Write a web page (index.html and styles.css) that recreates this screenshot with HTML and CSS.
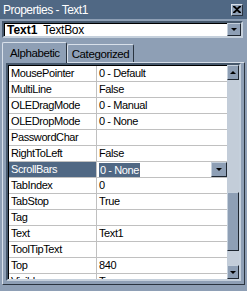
FILE: index.html
```html
<!DOCTYPE html>
<html lang="en">
<head>
    <meta charset="UTF-8">
    <title>Properties - Text1</title>
    <link rel="stylesheet" href="styles.css">
</head>
<body>

    <div class="window">
        <div class="titlebar">
            <span class="title">Properties - Text1</span>
            <button class="btn-close">
                <svg width="8" height="7" viewBox="0 0 8 7"><path d="M0 0h2l2 2 2-2h2v1L5 3.5 8 6v1H6L4 5 2 7H0V6l3-2.5L0 1z" fill="#000"/></svg>
            </button>
        </div>

        <div class="combo">
            <span class="combo-text"><b>Text1</b>&nbsp; TextBox</span>
            <span class="drop-btn"><span class="arrow"></span></span>
        </div>

        <div class="tabs">
            <div class="tab active">Alphabetic</div>
            <div class="tab">Categorized</div>
        </div>

        <div class="panel">
            <div class="grid">
                <div class="rows">
                    <div class="row"><div class="name">MousePointer</div><div class="value">0 - Default</div></div>
                    <div class="row"><div class="name">MultiLine</div><div class="value">False</div></div>
                    <div class="row"><div class="name">OLEDragMode</div><div class="value">0 - Manual</div></div>
                    <div class="row"><div class="name">OLEDropMode</div><div class="value">0 - None</div></div>
                    <div class="row"><div class="name">PasswordChar</div><div class="value"></div></div>
                    <div class="row"><div class="name">RightToLeft</div><div class="value">False</div></div>
                    <div class="row selected">
                        <div class="name">ScrollBars</div>
                        <div class="value"><span class="sel-text">0 - None</span><span class="drop-btn small"><span class="arrow"></span></span></div>
                    </div>
                    <div class="row"><div class="name">TabIndex</div><div class="value">0</div></div>
                    <div class="row"><div class="name">TabStop</div><div class="value">True</div></div>
                    <div class="row"><div class="name">Tag</div><div class="value"></div></div>
                    <div class="row"><div class="name">Text</div><div class="value">Text1</div></div>
                    <div class="row"><div class="name">ToolTipText</div><div class="value"></div></div>
                    <div class="row"><div class="name">Top</div><div class="value">840</div></div>
                    <div class="row"><div class="name">Visible</div><div class="value">True</div></div>
                </div>
                <div class="scrollbar">
                    <div class="sb-btn up"><span class="arrow up"></span></div>
                    <div class="sb-track">
                        <div class="sb-thumb"></div>
                    </div>
                    <div class="sb-btn down"><span class="arrow"></span></div>
                </div>
            </div>
        </div>
    </div>

</body>
</html>
```

FILE: styles.css
```css
body {
    margin: 0;
    font-family: "Liberation Sans", Arial, sans-serif;
    font-size: 11px;
}

.window {
    width: 247px;
    height: 291px;
    background: #8e9fb5;
    display: flex;
    flex-direction: column;
    overflow: hidden;
}

.titlebar {
    flex-shrink: 0;
    height: 19px;
    background: #506884;
    color: #ffffff;
    display: flex;
    align-items: center;
    justify-content: space-between;
    padding: 0 4px 0 3px;
    font-size: 12px;
    letter-spacing: -0.5px;
}

.btn-close {
    width: 12px;
    height: 12px;
    padding: 0;
    box-sizing: border-box;
    background: #8e9fb5;
    border: 1px solid;
    border-color: #d8e0ea #2a3440 #2a3440 #d8e0ea;
    display: flex;
    align-items: center;
    justify-content: center;
}

/* object combo box */
.combo {
    flex-shrink: 0;
    margin: 2px 4px 0 2px;
    height: 17px;
    box-sizing: border-box;
    background: #ffffff;
    border: 2px solid;
    border-color: #46586c #c5d0dc #c5d0dc #46586c;
    box-shadow: inset 1px 1px 0 #000;
    display: flex;
    align-items: center;
    justify-content: space-between;
}

.combo-text {
    padding-left: 3px;
    font-size: 12px;
    letter-spacing: -0.3px;
}

.combo-text b {
    letter-spacing: 0;
}

.drop-btn {
    width: 14px;
    height: 13px;
    background: #8e9fb5;
    border: 1px solid;
    border-color: #c5d0dc #1e2630 #1e2630 #c5d0dc;
    box-sizing: border-box;
    display: flex;
    align-items: center;
    justify-content: center;
}

.arrow {
    width: 0;
    height: 0;
    border-left: 3px solid transparent;
    border-right: 3px solid transparent;
    border-top: 3px solid #000;
}

.arrow.up {
    border-top: none;
    border-bottom: 3px solid #000;
}

/* tabs */
.tabs {
    flex-shrink: 0;
    display: flex;
    align-items: flex-end;
    margin-top: 4px;
    padding-left: 2px;
    height: 20px;
}

.tab {
    height: 17px;
    padding: 0 4px;
    border: 1px solid;
    border-bottom: none;
    border-color: #d8e0ea #2a3440 #2a3440 #d8e0ea;
    border-radius: 2px 2px 0 0;
    display: flex;
    align-items: center;
    color: #000;
    font-size: 11.5px;
    letter-spacing: -0.4px;
}

.tab.active {
    height: 20px;
    padding: 0 6px 0 7px;
    position: relative;
    z-index: 1;
    background: #8e9fb5;
    margin-bottom: -1px;
}

/* tab panel */
.panel {
    flex: 1;
    min-height: 0;
    margin: 0 2px 6px 2px;
    border: 1px solid;
    border-color: #d8e0ea #2a3440 #2a3440 #d8e0ea;
    padding: 0 3px 3px 3px;
    display: flex;
}

.grid {
    flex: 1;
    display: flex;
    border: 2px solid;
    border-color: #46586c #c5d0dc #c5d0dc #46586c;
    box-shadow: inset 1px 1px 0 #000;
    background: #ffffff;
    overflow: hidden;
}

.rows {
    flex: 1;
    padding-top: 1px;
    padding-left: 1px;
    overflow: hidden;
    letter-spacing: -0.4px;
}

.row {
    height: 16px;
    box-sizing: border-box;
    border-bottom: 1px solid #c0c0c0;
    display: flex;
}

.name {
    width: 85px;
    padding-left: 2px;
    border-right: 1px solid #c0c0c0;
    line-height: 15px;
    white-space: nowrap;
    overflow: hidden;
}

.value {
    flex: 1;
    padding-left: 2px;
    line-height: 15px;
    display: flex;
    justify-content: space-between;
}

.selected .name {
    background: #506884;
    color: #ffffff;
}

.sel-text {
    background: #506884;
    color: #ffffff;
    padding: 0 1px;
    line-height: 14px;
    height: 14px;
    margin-top: 1px;
}

.drop-btn.small {
    width: 16px;
    height: 15px;
}

/* scrollbar */
.scrollbar {
    width: 12px;
    display: flex;
    flex-direction: column;
    background: #c3cdd9;
}

.sb-btn {
    box-sizing: border-box;
    background: #8e9fb5;
    border: 1px solid;
    border-color: #c5d0dc #1e2630 #1e2630 #c5d0dc;
    display: flex;
    align-items: center;
    justify-content: center;
}

.sb-btn.up {
    height: 15px;
}

.sb-btn.down {
    height: 14px;
}

.sb-track {
    flex: 1;
    display: flex;
    flex-direction: column;
    padding-top: 112px;
}

.sb-thumb {
    height: 59px;
    background: #8e9fb5;
    border: 1px solid;
    border-color: #c5d0dc #1e2630 #1e2630 #c5d0dc;
    box-sizing: border-box;
}
```
